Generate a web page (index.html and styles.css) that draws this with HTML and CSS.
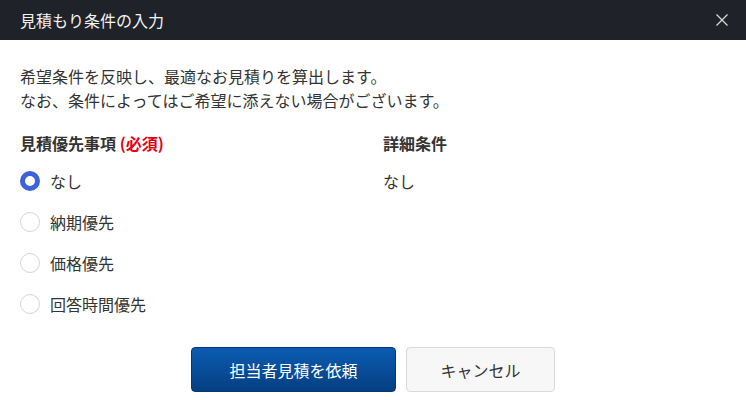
FILE: index.html
```html
<!DOCTYPE html>
<html lang="ja">
<head>
    <meta charset="UTF-8">
    <meta name="viewport" content="width=device-width, initial-scale=1.0">
    <title>見積もり条件の入力</title>
    <link rel="stylesheet" href="styles.css">
</head>
<body>
    <div class="dialog">
        <div class="dialog-header">
            <span class="dialog-title">見積もり条件の入力</span>
            <button type="button" class="close-button" aria-label="閉じる">
                <svg width="14" height="14" viewBox="0 0 14 14">
                    <path d="M1.5 1.5 L12.5 12.5 M12.5 1.5 L1.5 12.5" stroke="#d8d8d8" stroke-width="1.3" fill="none"/>
                </svg>
            </button>
        </div>
        <div class="dialog-body">
            <p class="intro">希望条件を反映し、最適なお見積りを算出します。<br>なお、条件によってはご希望に添えない場合がございます。</p>
            <div class="conditions">
                <div class="column">
                    <h3 class="column-title">見積優先事項 <span class="required">(必須)</span></h3>
                    <div class="options">
                        <label class="option"><input type="radio" name="priority" checked><span class="radio"></span>なし</label>
                        <label class="option"><input type="radio" name="priority"><span class="radio"></span>納期優先</label>
                        <label class="option"><input type="radio" name="priority"><span class="radio"></span>価格優先</label>
                        <label class="option"><input type="radio" name="priority"><span class="radio"></span>回答時間優先</label>
                    </div>
                </div>
                <div class="column">
                    <h3 class="column-title">詳細条件</h3>
                    <div class="options">
                        <div class="detail">なし</div>
                    </div>
                </div>
            </div>
            <div class="actions">
                <button type="button" class="button button-primary">担当者見積を依頼</button>
                <button type="button" class="button button-cancel">キャンセル</button>
            </div>
        </div>
    </div>
</body>
</html>
```

FILE: styles.css
```css
body {
    margin: 0;
    font-family: "Noto Sans CJK JP", "Noto Sans", sans-serif;
    background-color: #fff;
    color: #333;
}
.dialog {
    width: 746px;
    height: 400px;
    overflow: hidden;
}
.dialog-header {
    height: 40px;
    background-color: #1f2228;
    display: flex;
    align-items: center;
    justify-content: space-between;
    padding: 0 17px 0 20px;
    box-sizing: border-box;
}
.dialog-title {
    color: #f2f2f2;
    font-size: 16px;
    line-height: 24px;
}
.close-button {
    background: none;
    border: none;
    padding: 0;
    width: 14px;
    height: 14px;
    display: flex;
    cursor: pointer;
}
.dialog-body {
    padding: 24px 20px 0;
}
.intro {
    margin: 0;
    font-size: 16px;
    line-height: 24px;
}
.conditions {
    display: grid;
    grid-template-columns: 363px 1fr;
    margin-top: 19px;
}
.column-title {
    margin: 0;
    font-size: 16px;
    line-height: 24px;
    font-weight: bold;
}
.required {
    color: #e60012;
}
.options {
    display: flex;
    flex-direction: column;
    gap: 17px;
    margin-top: 14px;
}
.option, .detail {
    display: flex;
    align-items: center;
    gap: 10px;
    font-size: 16px;
    line-height: 24px;
    cursor: pointer;
}
.option input {
    display: none;
}
.radio {
    width: 20px;
    height: 20px;
    border-radius: 50%;
    border: 1px solid #d4d6db;
    box-sizing: border-box;
    background-color: #fff;
}
.option input:checked + .radio {
    border: 5px solid #3d61d9;
}
.actions {
    display: flex;
    justify-content: center;
    gap: 10px;
    margin-top: 31px;
}
.button {
    height: 45px;
    font-family: inherit;
    font-size: 16px;
    border-radius: 4px;
    cursor: pointer;
}
.button-primary {
    width: 205px;
    color: #fff;
    border: 1px solid #04386f;
    background: linear-gradient(#0a5cb3, #053f80);
}
.button-cancel {
    width: 149px;
    color: #333;
    border: 1px solid #d9d9de;
    background-color: #f7f7f8;
}
```
